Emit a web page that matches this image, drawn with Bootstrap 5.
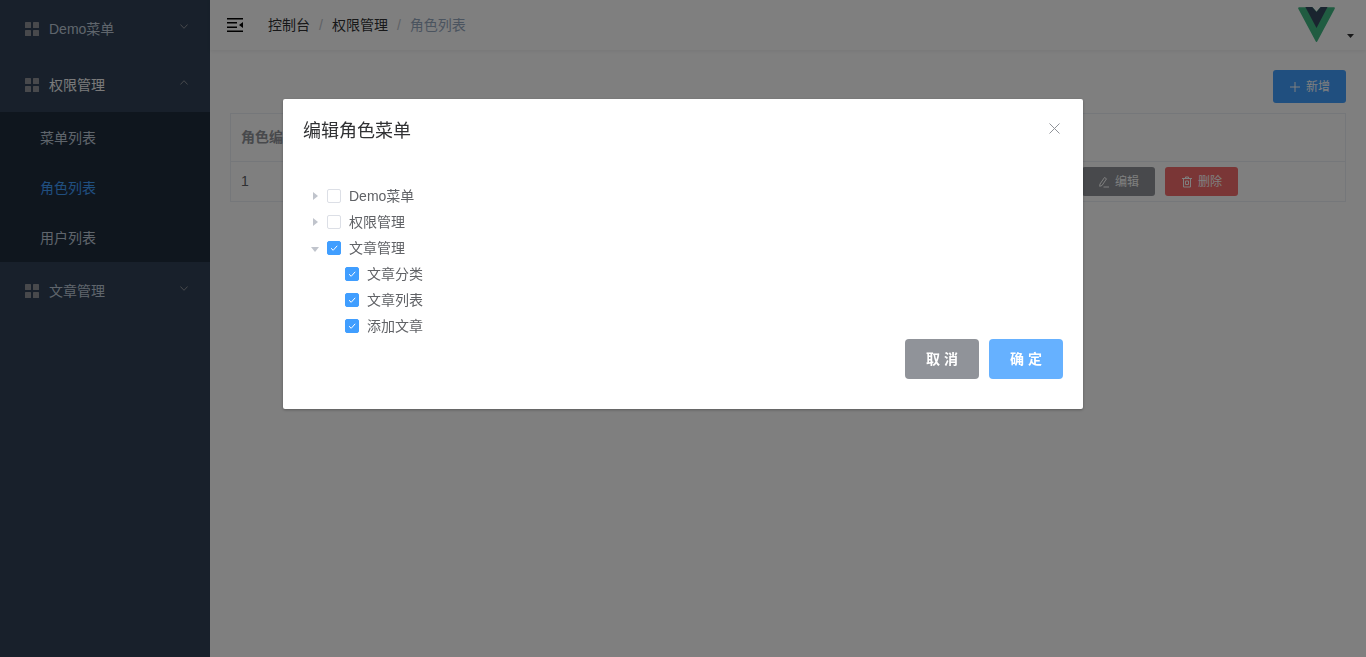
<!DOCTYPE html>
<html lang="zh">
<head>
<meta charset="utf-8">
<title>角色列表</title>
<link href="https://cdn.jsdelivr.net/npm/bootstrap@5.3.0/dist/css/bootstrap.min.css" rel="stylesheet">
<style>
html,body{height:100%;overflow:hidden}
body{font-family:"Liberation Sans","Noto Sans CJK SC",sans-serif;font-size:14px;color:#606266;background:#fff}
.shell{height:657px}
.side{width:210px;background:#304156;color:#bfcbd9}
.menu-head{height:56px;padding:2px 22px 0 25px}
.menu-head .ttl{margin-left:10px}
.menu-head.open-head{color:#f4f4f5}
.grid-ic{width:14px;height:14px;flex:none;fill:#909399}
.chev{width:8px;height:5px;flex:none;fill:none;stroke:#909399;stroke-width:1;margin-bottom:5px}
.sub-box{background:#1f2d3d}
.sub-row{height:50px;padding:2px 0 0 40px}
.sub-row.on{color:#409eff}
.top-bar{height:50px;box-shadow:0 1px 4px rgba(0,21,41,.08);padding-left:17px;padding-right:12px}
.burger{width:16px;height:14px;flex:none}
.crumb-list{margin:0 0 0 25px;color:#303133}
.crumb-list .breadcrumb-item+.breadcrumb-item{padding-left:9px}
.crumb-list .breadcrumb-item+.breadcrumb-item::before{color:#c0c4cc;padding-right:9px}
.crumb-list .breadcrumb-item.active{color:#97a8be}
.vue-logo{width:37px;height:35px;margin-top:7px;align-self:flex-start;overflow:visible}
.caret-ic{width:7px;height:4px;margin:34px 0 0 12px;align-self:flex-start;fill:#303133}
.pane{padding:20px}
.act-btn{height:33px;width:73px;padding:0;font-size:12px;border-radius:3px;background:#409eff;border:0;color:#fff;margin-bottom:10px}
.grid-tbl{table-layout:fixed;width:1116px;margin:0;border-color:#ebeef5;--bs-table-color:#606266;--bs-table-border-color:#ebeef5}
.grid-tbl th{height:48px;padding:0 10px;vertical-align:middle;color:#909399;font-weight:700}
.grid-tbl td{height:40px;padding:0 10px;vertical-align:middle}
.op-wrap{padding-left:71px;gap:10px}
.op-btn{height:29px;width:73px;padding:0;font-size:12px;border:0;border-radius:3px;color:#fff}
.op-edit,.op-edit:hover{background:#909399;color:#fff}
.op-del,.op-del:hover{background:#f56c6c;color:#fff}
.btn-ic{width:12px;height:12px;fill:none;stroke:#fff;stroke-width:1;margin-right:5px;vertical-align:-2px}
.modal-backdrop.show{opacity:.5}
.dlg{max-width:800px;width:800px;margin:99px auto 0}
.dlg .modal-content{border:0;border-radius:2px;box-shadow:0 1px 3px rgba(0,0,0,.3)}
.dlg-head{padding:20px 20px 10px;height:54px}
.dlg-title{font-size:18px;line-height:24px;color:#303133;font-weight:400;margin:0}
.x-ic{width:11px;height:11px;stroke:#909399;stroke-width:1;fill:none;margin:-6px 3px 0 0}
.dlg-body{padding:30px 20px 0}
.tree-row{height:26px}
.tree-row.kid{padding-left:18px}
.tri{width:0;height:0;flex:none;margin-left:10px;margin-right:9px;border-style:solid;border-color:transparent transparent transparent #c0c4cc;border-width:4px 0 4px 5px}
.tri.down{margin-left:8px;margin-right:8px;margin-top:3px;border-color:#c0c4cc transparent transparent transparent;border-width:5px 4px 0 4px}
.tri.none{border:0;margin-right:24px;margin-left:0}
.tick{width:14px;height:14px;flex:none;border:1px solid #dcdfe6;border-radius:2px;background:#fff;margin-right:8px;display:flex;align-items:center;justify-content:center}
.tick.on{background:#409eff;border-color:#409eff}
.tick svg{width:10px;height:10px;fill:none;stroke:#fff;stroke-width:1}
.dlg-foot{padding:0 20px 30px;gap:10px}
.foot-btn{width:74px;height:40px;padding:0;border:0;border-radius:4px;color:#fff;font-size:14px;font-weight:700;letter-spacing:0}
.foot-cancel,.foot-cancel:hover{background:#909399;color:#fff}
.foot-ok,.foot-ok:hover{background:#66b1ff;color:#fff}
</style>
</head>
<body>
<svg width="0" height="0" class="d-block position-absolute">
  <symbol id="g4" viewBox="0 0 14 14"><rect width="6" height="6" rx=".6"/><rect x="8" width="6" height="6" rx=".6"/><rect y="8" width="6" height="6" rx=".6"/><rect x="8" y="8" width="6" height="6" rx=".6"/></symbol>
  <symbol id="ck" viewBox="0 0 10 10"><path d="M2 5.200 4.200 7.300 8.200 2.800"/></symbol>
</svg>
<div class="shell d-flex">
  <aside class="side flex-shrink-0">
    <div class="menu-head d-flex align-items-center"><svg class="grid-ic"><use href="#g4"/></svg><span class="ttl flex-grow-1">Demo菜单</span><svg class="chev" viewBox="0 0 8 5"><path d="M.4.500 4 4.300 7.600.500"/></svg></div>
    <div class="menu-head open-head d-flex align-items-center"><svg class="grid-ic"><use href="#g4"/></svg><span class="ttl flex-grow-1">权限管理</span><svg class="chev" viewBox="0 0 8 5"><path d="M.4 4.500 4 .7 7.600 4.500"/></svg></div>
    <div class="sub-box">
      <div class="sub-row d-flex align-items-center">菜单列表</div>
      <div class="sub-row on d-flex align-items-center">角色列表</div>
      <div class="sub-row d-flex align-items-center">用户列表</div>
    </div>
    <div class="menu-head d-flex align-items-center"><svg class="grid-ic"><use href="#g4"/></svg><span class="ttl flex-grow-1">文章管理</span><svg class="chev" viewBox="0 0 8 5"><path d="M.4.500 4 4.300 7.600.500"/></svg></div>
  </aside>
  <div class="flex-grow-1 d-flex flex-column">
    <header class="top-bar d-flex align-items-center">
      <svg class="burger" viewBox="0 0 16 14"><path d="M0 0h16v1.500H0zM0 4h10v1.500H0zM0 8.500h10V10H0zM0 12.500h16V14H0zM16 4v6l-4-3z" fill="#000"/></svg>
      <ol class="breadcrumb crumb-list">
        <li class="breadcrumb-item">控制台</li>
        <li class="breadcrumb-item">权限管理</li>
        <li class="breadcrumb-item active">角色列表</li>
      </ol>
      <div class="ms-auto d-flex h-100">
        <svg class="vue-logo" viewBox="0 0 261.76 226.69" preserveAspectRatio="none"><path fill="#41b883" stroke="#41b883" stroke-width="14" stroke-linejoin="round" d="M161 8 131 40 100 8H8l122.900 210.700L253.800 8z"/><path fill="#35495e" d="M161 0 131 32 100 0H52l79 136L209 0z"/></svg>
        <svg class="caret-ic" viewBox="0 0 7 4"><path d="M0 0h7L3.500 4z"/></svg>
      </div>
    </header>
    <main class="pane flex-grow-1">
      <div class="d-flex justify-content-end">
        <button class="btn act-btn" type="button"><svg class="btn-ic" viewBox="0 0 12 12"><path d="M6 1v10M1 6h10"/></svg>新增</button>
      </div>
      <table class="table table-bordered grid-tbl">
        <colgroup><col style="width:770px"><col></colgroup>
        <thead><tr><th>角色编号</th><th>操作</th></tr></thead>
        <tbody><tr><td>1</td><td>
          <div class="d-flex op-wrap">
            <button class="btn op-btn op-edit" type="button"><svg class="btn-ic" viewBox="0 0 12 12"><path d="M2 8 6.500 1.500l2 1.300L4 9.500l-2.300.8zM5.500 11H11"/></svg>编辑</button>
            <button class="btn op-btn op-del" type="button"><svg class="btn-ic" viewBox="0 0 12 12"><path d="M1 2.500h10M4.500 2.500V1h3v1.500M2.500 2.500v8.500h7V2.500M4.500 5h3v3.500h-3z"/></svg>删除</button>
          </div></td></tr></tbody>
      </table>
    </main>
  </div>
</div>
<div class="modal-backdrop show"></div>
<div class="modal d-block" role="dialog" aria-modal="true">
  <div class="modal-dialog dlg">
    <div class="modal-content">
      <div class="dlg-head d-flex justify-content-between align-items-center">
        <h5 class="dlg-title">编辑角色菜单</h5>
        <svg class="x-ic" viewBox="0 0 11 11"><path d="M.5.500l10 10M10.500.500l-10 10"/></svg>
      </div>
      <div class="dlg-body">
        <div class="tree-row d-flex align-items-center"><span class="tri"></span><span class="tick"></span><span>Demo菜单</span></div>
        <div class="tree-row d-flex align-items-center"><span class="tri"></span><span class="tick"></span><span>权限管理</span></div>
        <div class="tree-row d-flex align-items-center"><span class="tri down"></span><span class="tick on"><svg><use href="#ck"/></svg></span><span>文章管理</span></div>
        <div class="tree-row kid d-flex align-items-center"><span class="tri none"></span><span class="tick on"><svg><use href="#ck"/></svg></span><span>文章分类</span></div>
        <div class="tree-row kid d-flex align-items-center"><span class="tri none"></span><span class="tick on"><svg><use href="#ck"/></svg></span><span>文章列表</span></div>
        <div class="tree-row kid d-flex align-items-center"><span class="tri none"></span><span class="tick on"><svg><use href="#ck"/></svg></span><span>添加文章</span></div>
      </div>
      <div class="dlg-foot d-flex justify-content-end">
        <button class="btn foot-btn foot-cancel" type="button">取 消</button>
        <button class="btn foot-btn foot-ok" type="button">确 定</button>
      </div>
    </div>
  </div>
</div>
<script src="https://cdn.jsdelivr.net/npm/bootstrap@5.3.0/dist/js/bootstrap.bundle.min.js"></script>
</body>
</html>
